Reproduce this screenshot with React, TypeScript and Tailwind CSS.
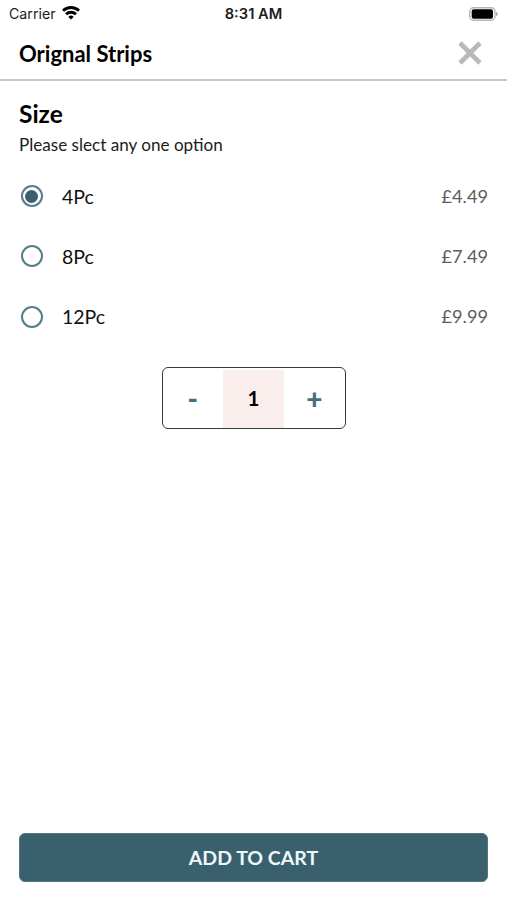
import { useState } from 'react';

const options = [
  { label: '4Pc', price: '£4.49' },
  { label: '8Pc', price: '£7.49' },
  { label: '12Pc', price: '£9.99' },
];

const StatusBar = () => {
  return (
    <div className="grid h-[27px] grid-cols-3 items-center pl-[9px] pr-[9px] font-['Inter',sans-serif] text-[#1c1c1c]">
      <div className="flex items-center gap-[6px] text-[14.2px]">
        <span>Carrier</span>
        <svg width="18" height="14" viewBox="0 0 18 14" fill="none" stroke="#000" strokeWidth="2.8">
          <path d="M1 4.8a11.3 11.3 0 0 1 16 0" />
          <path d="M4 8.3a7.1 7.1 0 0 1 10 0" />
          <path d="M9 13.5 6.3 10.9a3.9 3.9 0 0 1 5.4 0Z" fill="#000" stroke="none" />
        </svg>
      </div>
      <div className="pt-px text-center text-[14.7px] font-semibold">8:31 AM</div>
      <svg className="justify-self-end" width="29" height="14" viewBox="2 0 29 14">
        <rect x="2.7" y="0.7" width="25.3" height="12.6" rx="4" fill="#fff" stroke="#b5b5b5" strokeWidth="1.4" />
        <rect x="4.7" y="2.3" width="21.3" height="9.4" rx="2" fill="#000" />
        <path d="M29 4.8c2.2.8 2.2 3.6 0 4.4Z" fill="#a5a5a5" />
      </svg>
    </div>
  );
};

export default function App() {
  const [selected, setSelected] = useState(0);
  const [quantity, setQuantity] = useState(1);

  return (
    <div className="flex h-[900px] w-full flex-col bg-white font-['Lato',sans-serif] text-black">
      <StatusBar />
      <header className="flex h-[54px] items-center justify-between border-b-2 border-[#c8c8c8] pl-[19px] pr-[25px]">
        <h1 className="pt-px text-[22px] font-bold leading-7">Orignal Strips</h1>
        <button aria-label="Close">
          <svg width="24" height="24" viewBox="0 0 24 24" stroke="#b9b9b9" strokeWidth="4.6">
            <path d="m2 2 20 20M22 2 2 22" />
          </svg>
        </button>
      </header>

      <main className="flex flex-1 flex-col px-[19px] pt-[17px]">
        <h2 className="text-[24.5px] font-bold leading-8">Size</h2>
        <p className="mt-[3px] text-[17.1px] leading-6 text-[#1c1c1c]">Please slect any one option</p>

        <div className="mt-[9px]">
          {options.map((option, index) => (
            <button
              key={option.label}
              onClick={() => setSelected(index)}
              className="flex h-[60.3px] w-full items-center text-[19.5px]"
            >
              <span className="ml-[1.5px] flex size-[22px] items-center justify-center rounded-full border-2 border-[#557c89]">
                {selected === index && <span className="size-[13px] rounded-full bg-[#3b616e]" />}
              </span>
              <span className="ml-[19.5px] text-[#111]">{option.label}</span>
              <span className="ml-auto text-[18.2px] text-[#5c5c5c]">{option.price}</span>
            </button>
          ))}
        </div>

        <div className="mt-[20px] flex h-[62px] w-[184px] self-center rounded-md border-[1.5px] border-[#3a3a3a] text-[28px] font-black text-[#427080]">
          <button className="flex-1 leading-none" onClick={() => setQuantity(Math.max(1, quantity - 1))}>
            -
          </button>
          <span className="mt-[2px] flex w-[61px] items-center justify-center bg-[#faeeed] pb-px text-[20.5px] font-bold text-black">
            {quantity}
          </span>
          <button className="flex-1 leading-none" onClick={() => setQuantity(quantity + 1)}>
            +
          </button>
        </div>

        <button className="mb-[18px] mt-auto h-[49px] w-full rounded-md border border-[#527581] bg-[#3a606d] pt-px text-[19.5px] font-bold text-[#edf7fc]">
          ADD TO CART
        </button>
      </main>
    </div>
  );
}
